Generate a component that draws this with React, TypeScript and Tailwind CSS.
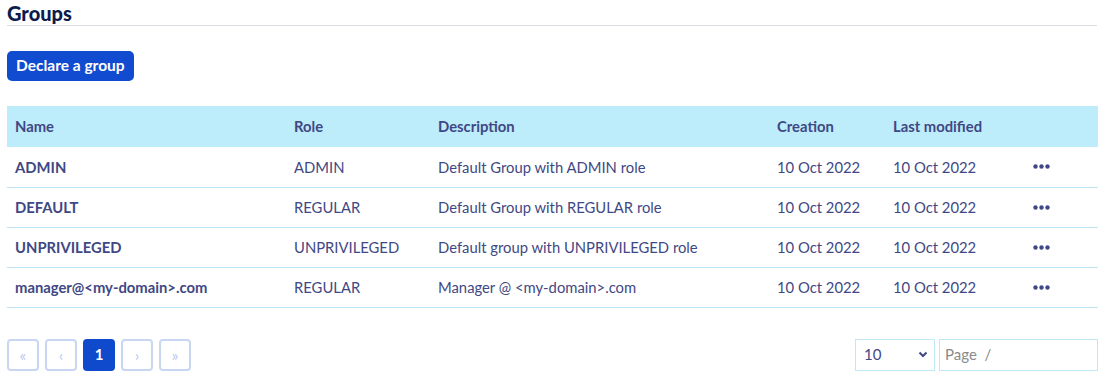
import React from 'react';

const rows = [
  { name: 'ADMIN', role: 'ADMIN', desc: 'Default Group with ADMIN role' },
  { name: 'DEFAULT', role: 'REGULAR', desc: 'Default Group with REGULAR role' },
  { name: 'UNPRIVILEGED', role: 'UNPRIVILEGED', desc: 'Default group with UNPRIVILEGED role' },
  { name: 'manager@<my-domain>.com', role: 'REGULAR', desc: 'Manager @ <my-domain>.com' },
];

function Dots() {
  return (
    <svg width="17" height="5" viewBox="0 0 17 5" className="fill-[#3f4884]">
      <circle cx="2.5" cy="2.5" r="2.2" />
      <circle cx="8.5" cy="2.5" r="2.2" />
      <circle cx="14.5" cy="2.5" r="2.2" />
    </svg>
  );
}

function PageButton({ label, active = false }: { label: string; active?: boolean }) {
  return (
    <button
      className={
        active
          ? 'w-[32px] h-[32px] rounded-[4px] bg-[#0f49cc] text-white font-bold text-[15px] flex items-center justify-center'
          : 'w-[32px] h-[32px] rounded-[4px] border-2 border-[#c8d6f3] text-[#b8c8ee] text-[16px] flex items-center justify-center'
      }
    >
      {label}
    </button>
  );
}

export default function App() {
  return (
    <div className="w-[1109px] h-[380px] bg-white px-[7px] pt-[3px] text-[#3f4884] font-['Lato','Liberation_Sans',sans-serif]">
      <h1 className="text-[20px] font-black text-[#0c1b4b] leading-[21px] pb-[1px] border-b border-[#dcdde2] w-[1090px]">
        Groups
      </h1>
      <button className="mt-[25px] h-[30px] px-[9px] rounded-[5px] bg-[#114bcf] text-white font-bold text-[15.5px]">
        Declare a group
      </button>
      <table className="mt-[25px] w-[1091px] table-fixed border-collapse text-[14.8px] text-left">
        <colgroup>
          <col className="w-[279px]" />
          <col className="w-[144px]" />
          <col className="w-[339px]" />
          <col className="w-[116px]" />
          <col className="w-[140px]" />
          <col />
        </colgroup>
        <thead>
          <tr className="bg-[#bdecfb] h-[41px]">
            <th className="pl-[8px] font-bold">Name</th>
            <th className="pl-[8px] font-bold">Role</th>
            <th className="pl-[8px] font-bold">Description</th>
            <th className="pl-[8px] font-bold">Creation</th>
            <th className="pl-[8px] font-bold">Last modified</th>
            <th></th>
          </tr>
        </thead>
        <tbody>
          {rows.map((r) => (
            <tr key={r.name} className="h-[40px] border-b border-[#bde7f6]">
              <td className="pl-[8px] font-bold">{r.name}</td>
              <td className="pl-[8px]">{r.role}</td>
              <td className="pl-[8px]">{r.desc}</td>
              <td className="pl-[8px]">10 Oct 2022</td>
              <td className="pl-[8px]">10 Oct 2022</td>
              <td className="pl-[8px]">
                <Dots />
              </td>
            </tr>
          ))}
        </tbody>
      </table>
      <div className="mt-[31px] flex items-center justify-between w-[1091px]">
        <div className="flex gap-[6px]">
          <PageButton label="«" />
          <PageButton label="‹" />
          <PageButton label="1" active />
          <PageButton label="›" />
          <PageButton label="»" />
        </div>
        <div className="flex gap-[4px]">
          <div className="w-[80px] h-[32px] border border-[#bfe8f6] flex items-center justify-between pl-[8px] pr-[6px] text-[15px]">
            <span>10</span>
            <svg width="10" height="7" viewBox="0 0 10 7">
              <path d="M1.5 1.5 L5 5 L8.5 1.5" fill="none" stroke="#3f4884" strokeWidth="2" />
            </svg>
          </div>
          <div className="w-[159px] h-[32px] border border-[#bfe8f6] flex items-center px-[5px] text-[15px] text-[#8a8a8a]">
            Page&nbsp;&nbsp;/
          </div>
        </div>
      </div>
    </div>
  );
}
